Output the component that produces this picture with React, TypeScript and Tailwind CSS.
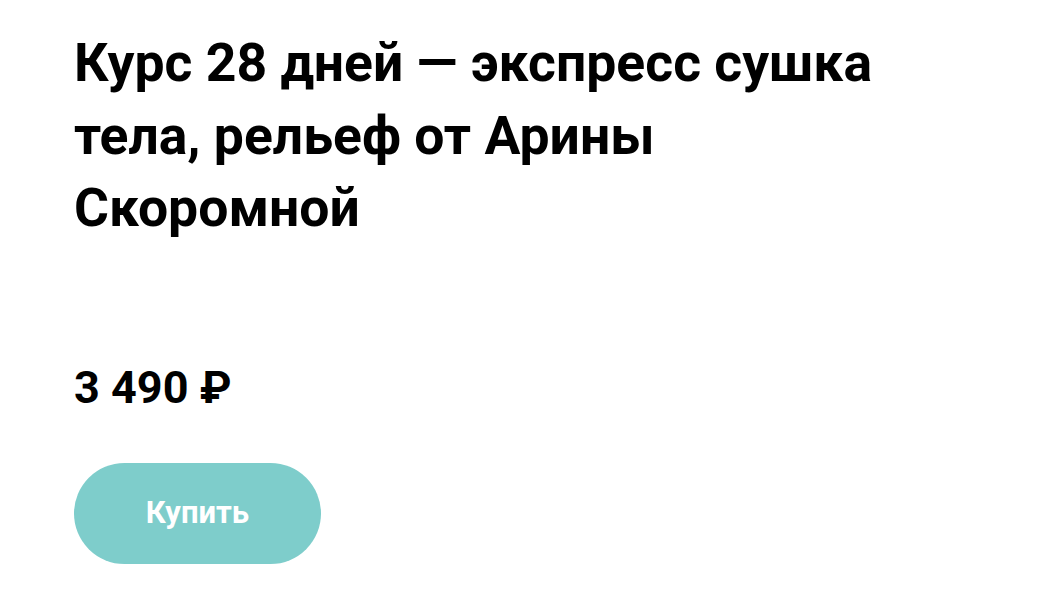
import React from 'react';

// Product card: title, price and buy button
export default function App() {
    return (
        <div className="min-h-screen bg-white" style={{ fontFamily: 'Roboto, "Noto Sans", sans-serif' }}>
            <div className="pl-[74px] pt-[27px] w-[924px]">
                <h1 className="text-[53.5px] leading-[72.5px] font-bold text-black">
                    Курс 28 дней — экспресс сушка тела, рельеф от Арины Скоромной
                </h1>
                <div className="mt-[120px] text-[45px] leading-[45px] font-bold text-black">3 490 ₽</div>
                <button className="mt-[53px] w-[247px] h-[101px] rounded-full bg-[#7ecdcb] text-white text-[31px] font-bold">
                    Купить
                </button>
            </div>
        </div>
    );
}
